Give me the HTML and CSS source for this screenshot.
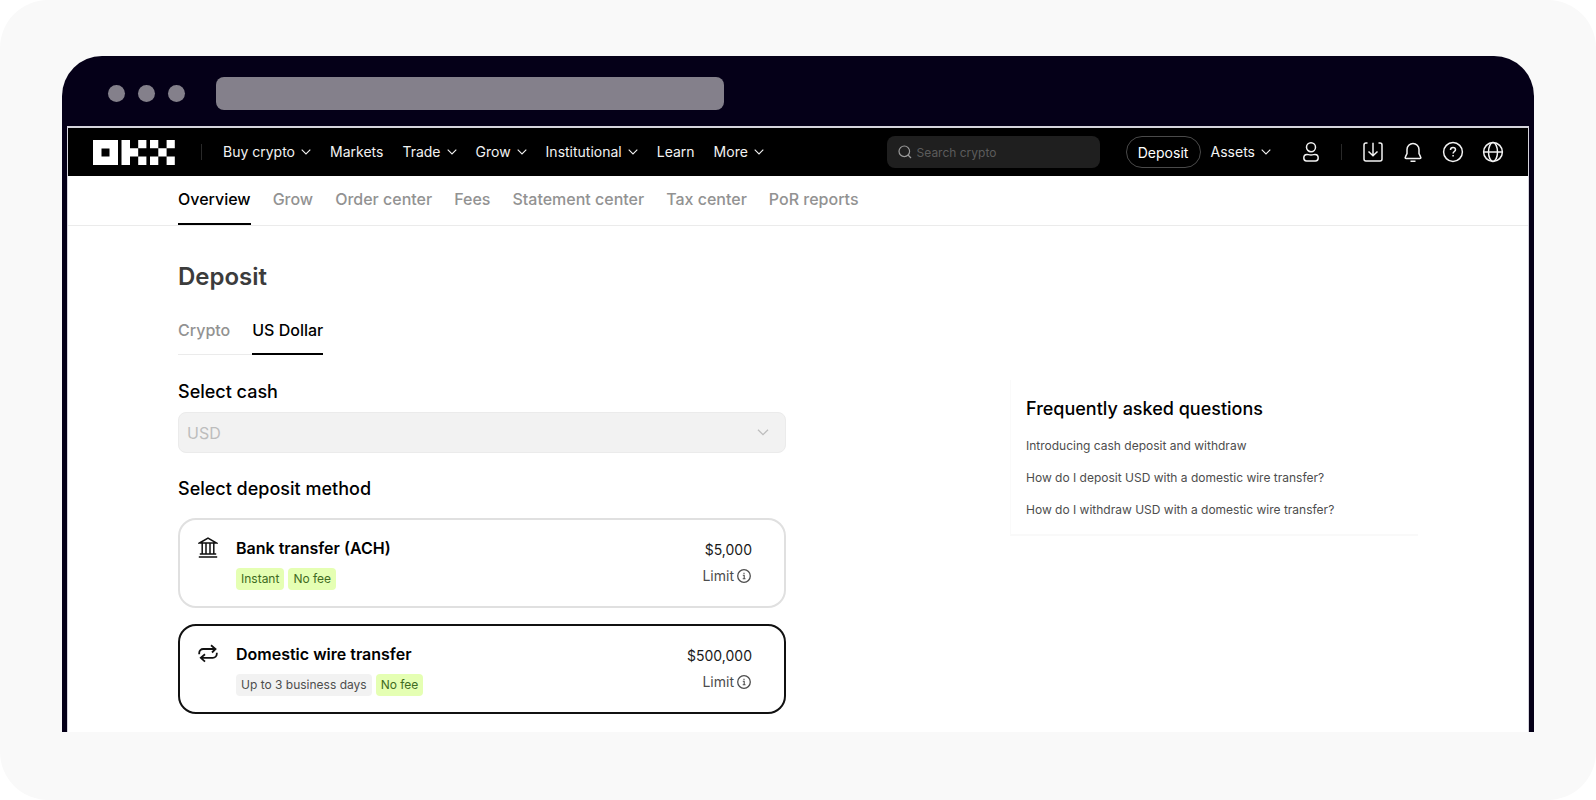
FILE: index.html
```
<!DOCTYPE html>
<html lang="en">
<head>
	<meta charset="UTF-8">
	<meta name="viewport" content="width=device-width, initial-scale=1.0">
	<title>Deposit | OKX</title>
	<link rel="stylesheet" href="styles.css">
</head>
<body>
<!-- shared icons -->
<svg class="sprite" width="0" height="0" aria-hidden="true">
	<symbol id="chevron" viewBox="0 0 10 6"><path d="M.7.7 5 4.9 9.3.7" fill="none" stroke="currentColor" stroke-width="1.1"/></symbol>
	<symbol id="info" viewBox="0 0 14 14"><circle cx="7" cy="7" r="6.3" fill="none" stroke="currentColor" stroke-width="1.3"/><path d="M5.8 6.3h1.4v3.4M5.7 9.7h2.8M7 3.8v1.2" fill="none" stroke="currentColor" stroke-width="1.1"/></symbol>
</svg>

<div class="stage">
	<div class="browser">
		<div class="titlebar">
			<span class="dot"></span>
			<span class="dot"></span>
			<span class="dot"></span>
			<span class="address"></span>
		</div>

		<div class="page">
			<header class="header">
				<a class="logo" href="#" aria-label="OKX">
					<svg width="82" height="25" viewBox="0 0 82 25" fill="#fff">
						<path fill-rule="evenodd" d="M0 0h25v25H0zM8.5 8.5v8h8v-8z"/>
						<path d="M28.5 0h8.5v8.3h8.2v8.2H37V25h-8.5z"/>
						<path d="M45.2 0h8.2v8.3h-8.2zM45.2 16.5h8.2V25h-8.2z"/>
						<path d="M57 0h8.3v8.3H57zM73.6 0h8.2v8.3h-8.2zM65.3 8.3h8.3v8.2h-8.3zM57 16.5h8.3V25H57zM73.6 16.5h8.2V25h-8.2z"/>
					</svg>
				</a>
				<span class="divider"></span>
				<nav class="menu">
					<button class="menu-item">Buy crypto <svg class="chevron"><use href="#chevron"/></svg></button>
					<a class="menu-item" href="#">Markets</a>
					<button class="menu-item">Trade <svg class="chevron"><use href="#chevron"/></svg></button>
					<button class="menu-item">Grow <svg class="chevron"><use href="#chevron"/></svg></button>
					<button class="menu-item">Institutional <svg class="chevron"><use href="#chevron"/></svg></button>
					<a class="menu-item" href="#">Learn</a>
					<button class="menu-item">More <svg class="chevron"><use href="#chevron"/></svg></button>
				</nav>
				<label class="search">
					<svg width="14" height="14" viewBox="0 0 14 14" fill="none" stroke="currentColor" stroke-width="1.2"><circle cx="6.3" cy="6.3" r="5.3"/><path d="m10 10 3 3"/></svg>
					<input type="text" placeholder="Search crypto" aria-label="Search crypto">
				</label>
				<button class="deposit-btn">Deposit</button>
				<button class="menu-item">Assets <svg class="chevron"><use href="#chevron"/></svg></button>
				<div class="tools">
					<button class="tool" aria-label="Profile">
						<svg width="16" height="20" viewBox="0 0 16 20"><circle cx="8" cy="5.2" r="4.5"/><path d="M4 12.4c1.2 0 2 .6 4 .6s2.800-.6 4-.6c1.900 0 3.200 1.600 3.200 3.600S14.200 18.900 12.500 18.900h-9C1.800 18.900.8 18 .8 16s1.300-3.600 3.200-3.600z"/></svg>
					</button>
					<span class="divider"></span>
					<button class="tool" aria-label="Download">
						<svg width="20" height="20" viewBox="0 0 20 20"><path d="M4.500 1H3a2 2 0 0 0-2 2v14a2 2 0 0 0 2 2h14a2 2 0 0 0 2-2V3a2 2 0 0 0-2-2h-1.500M10 .8v13M5.500 9.500l4.500 4.300 4.500-4.300"/></svg>
					</button>
					<button class="tool" aria-label="Notifications">
						<svg width="20" height="20" viewBox="0 0 20 20"><path d="M4 7.500a6 6 0 0 1 12 0v4l1.700 3.600c.4.800 0 1.500-.9 1.500H3.200c-.9 0-1.300-.7-.9-1.500L4 11.500z"/><path d="M7.500 19.200h5"/></svg>
					</button>
					<button class="tool" aria-label="Help">
						<svg width="20" height="20" viewBox="0 0 20 20"><circle cx="10" cy="10" r="9.400"/><path d="M7.500 8c0-1.500 1-2.500 2.500-2.500s2.500.9 2.500 2.200c0 1.800-2.400 1.900-2.400 3.900M10.100 13.100v1.500"/></svg>
					</button>
					<button class="tool" aria-label="Language">
						<svg width="20" height="20" viewBox="0 0 20 20"><circle cx="10" cy="10" r="9.400"/><ellipse cx="10" cy="10" rx="4.500" ry="9.400"/><path d="M.8 10h18.400"/></svg>
					</button>
				</div>
			</header>

			<nav class="subnav">
				<div class="subnav-inner">
					<a class="tab active" href="#">Overview</a>
					<a class="tab" href="#">Grow</a>
					<a class="tab" href="#">Order center</a>
					<a class="tab" href="#">Fees</a>
					<a class="tab" href="#">Statement center</a>
					<a class="tab" href="#">Tax center</a>
					<a class="tab" href="#">PoR reports</a>
				</div>
			</nav>

			<main class="content">
				<section class="form">
					<h1>Deposit</h1>
					<div class="type-tabs">
						<button class="tab">Crypto</button>
						<button class="tab active">US Dollar</button>
					</div>

					<label class="heading" for="cash">Select cash</label>
					<div class="select">
						<select id="cash" disabled><option>USD</option></select>
						<svg class="select-arrow"><use href="#chevron"/></svg>
					</div>

					<h2 class="heading">Select deposit method</h2>
					<label class="method">
						<input type="radio" name="method">
						<svg class="method-icon" width="20" height="21" viewBox="0 0 20 21"><path d="M1.500 6 10 1l8.500 5zM4.200 6v11M8 6v11M12 6v11M15.800 6v11M1.800 17h16.400M.8 20h18.400"/></svg>
						<span class="method-info">
							<span class="method-name">Bank transfer (ACH)</span>
							<span class="tags"><span class="tag green">Instant</span><span class="tag green">No fee</span></span>
						</span>
						<span class="method-limit">
							<span class="amount">$5,000</span>
							<span class="limit">Limit <svg width="14" height="14"><use href="#info"/></svg></span>
						</span>
					</label>
					<label class="method">
						<input type="radio" name="method" checked>
						<svg class="method-icon transfer" width="20" height="21" viewBox="0 0 20 21"><path d="M1.200 11.200v-1.200a4 4 0 0 1 4-4h12.300M13 2.300 17.500 6 14 9.500M18.800 9.800v1a4 4 0 0 1-4 4H2.800M7 11.300l-4.200 3.500L7 18.700"/></svg>
						<span class="method-info">
							<span class="method-name">Domestic wire transfer</span>
							<span class="tags"><span class="tag">Up to 3 business days</span><span class="tag green">No fee</span></span>
						</span>
						<span class="method-limit">
							<span class="amount">$500,000</span>
							<span class="limit">Limit <svg width="14" height="14"><use href="#info"/></svg></span>
						</span>
					</label>
				</section>

				<aside class="faq">
					<h2>Frequently asked questions</h2>
					<a href="#">Introducing cash deposit and withdraw</a>
					<a href="#">How do I deposit USD with a domestic wire transfer?</a>
					<a href="#">How do I withdraw USD with a domestic wire transfer?</a>
				</aside>
			</main>
		</div>
	</div>
</div>
</body>
</html>
```
FILE: styles.css
```
*{
	box-sizing: border-box;
}
body{
	margin: 0;
	background-color: #fff;
	font-family: Inter, "Liberation Sans", sans-serif;
	color: #000;
}
button, input, select{
	font-family: inherit;
}
button{
	padding: 0;
	border: 0;
	background: none;
	cursor: pointer;
}
a{
	text-decoration: none;
}
h1, h2{
	margin: 0;
}
.sprite{
	position: absolute;
}
.stage{
	display: flex;
	height: 100vh;
	padding: 56px 62px 68px;
	border-radius: 48px;
	background-color: #f9f9f9;
}
.browser{
	display: flex;
	flex-direction: column;
	flex: 1;
	min-width: 0;
	padding: 0 5px;
	border-radius: 40px 40px 0 0;
	background-color: #050018;
	overflow: hidden;
}

/* window chrome */
.titlebar{
	display: flex;
	align-items: center;
	flex: none;
	gap: 13px;
	height: 70px;
	padding: 5px 41px 0;
}
.dot{
	width: 17px;
	height: 17px;
	border-radius: 50%;
	background-color: #84808b;
}
.address{
	width: 508px;
	height: 33px;
	margin-left: 18px;
	border-radius: 8px;
	background-color: #84808b;
}
.page{
	flex: 1;
	min-height: 0;
	border: 1px solid #d5d4dc;
	border-top-width: 2px;
	border-bottom: 0;
	background-color: #fff;
	overflow: hidden;
}

/* top navigation */
.header{
	display: flex;
	align-items: center;
	height: 48px;
	padding: 0 25px;
	background-color: #000;
	color: #f2f2f2;
}
.logo{
	display: flex;
}
.divider{
	width: 1px;
	height: 16px;
	margin: 0 21px 0 26px;
	background-color: #292929;
}
.menu{
	display: flex;
	gap: 19px;
}
.menu-item{
	display: flex;
	align-items: center;
	gap: 6px;
	color: inherit;
	font-size: 14px;
	line-height: 20px;
	white-space: nowrap;
}
.chevron{
	width: 10px;
	height: 6px;
}
.search{
	display: flex;
	align-items: center;
	gap: 5px;
	width: 213px;
	height: 32px;
	margin-left: auto;
	padding: 0 11px;
	border-radius: 8px;
	background-color: #1f1f1f;
	color: #9a9a9a;
}
.search input{
	flex: 1;
	min-width: 0;
	padding: 0;
	border: 0;
	outline: 0;
	background: none;
	color: #fff;
	font-size: 12px;
}
.search input::placeholder{
	color: #5c5c5c;
}
.deposit-btn{
	width: 75px;
	height: 32px;
	margin: 0 10px 0 26px;
	border: 1px solid #4a4a4a;
	border-radius: 16px;
	color: #fff;
	font-size: 14px;
}
.tools{
	display: flex;
	align-items: center;
	gap: 20px;
	margin-left: 32px;
}
.tools .divider{
	margin: 0 1px 0 2px;
}
.tool{
	display: flex;
}
.tool svg{
	fill: none;
	stroke: #f2f2f2;
	stroke-width: 1.5px;
	overflow: visible;
}

/* tabs */
.subnav{
	border-bottom: 1px solid #ebebeb;
}
.subnav-inner{
	display: flex;
	gap: 22px;
	max-width: 1240px;
	margin: 0 auto;
}
.tab{
	border-bottom: 2px solid transparent;
	color: #929292;
	font-size: 16px;
	font-weight: 500;
	line-height: 24px;
	white-space: nowrap;
}
.tab.active{
	border-color: #000;
	color: #000;
}
.subnav .tab{
	padding: 11px 0 12px;
}

/* deposit form */
.content{
	display: flex;
	justify-content: space-between;
	align-items: flex-start;
	max-width: 1240px;
	margin: 0 auto;
}
.form{
	width: 608px;
	padding-top: 35px;
}
.form h1{
	color: #3c3c3c;
	font-size: 24px;
	font-weight: 600;
	line-height: 32px;
}
.type-tabs{
	display: inline-flex;
	gap: 22px;
	margin: 25px 0 24px;
	border-bottom: 1px solid #ebebeb;
}
.type-tabs .tab{
	padding-bottom: 11px;
	margin-bottom: -1px;
}
.heading{
	display: block;
	font-size: 18px;
	font-weight: 500;
	line-height: 26px;
}
.select{
	display: grid;
	align-items: center;
	margin: 7px 0 23px;
}
.select select{
	grid-area: 1 / 1;
	width: 100%;
	height: 41px;
	padding: 0 8px;
	border: 1px solid #ebebeb;
	border-radius: 8px;
	background-color: #f2f2f2;
	color: #bdbdbd;
	font-size: 16px;
	opacity: 1;
	appearance: none;
}
.select-arrow{
	grid-area: 1 / 1;
	justify-self: end;
	width: 12px;
	height: 7px;
	margin-right: 17px;
	color: #bdbdbd;
}
.method{
	display: flex;
	align-items: flex-start;
	height: 90px;
	margin-top: 16px;
	padding: 17px 32px 0 18px;
	border: 2px solid #e0e0e0;
	border-radius: 18px;
	cursor: pointer;
}
.method:has(input:checked){
	border-color: #111;
}
.method input{
	position: absolute;
	opacity: 0;
}
.method-icon{
	flex: none;
	margin-right: 18px;
	fill: none;
	stroke: #111;
	stroke-width: 1.5px;
}
.method-icon.transfer{
	stroke-width: 1.8px;
}
.method-info{
	flex: 1;
}
.method-name{
	display: block;
	font-size: 16px;
	font-weight: 600;
	line-height: 22px;
}
.tags{
	display: flex;
	gap: 4px;
	margin-top: 9px;
}
.tag{
	padding: 0 5px;
	border-radius: 4px;
	background-color: #f2f2f2;
	color: #4d4d4d;
	font-size: 12px;
	line-height: 22px;
}
.tag.green{
	background-color: #e5ffb3;
	color: #3f6b22;
}
.method-limit{
	text-align: right;
	font-size: 14px;
	line-height: 26px;
}
.amount{
	display: block;
	color: #1a1a1a;
}
.limit{
	display: flex;
	align-items: center;
	justify-content: flex-end;
	gap: 3px;
	padding-right: 1px;
	color: #4d4d4d;
}

/* faq */
.faq{
	display: flex;
	flex-direction: column;
	width: 408px;
	margin-top: 154px;
	padding: 17px 15px 8px;
	border-bottom: 2px solid #f9f9f9;
	border-left: 1px solid #fafafa;
}
.faq h2{
	margin-bottom: 9px;
	font-size: 18px;
	font-weight: 500;
	line-height: 24px;
}
.faq a{
	color: #4d4d4d;
	font-size: 12px;
	line-height: 32px;
}
```
